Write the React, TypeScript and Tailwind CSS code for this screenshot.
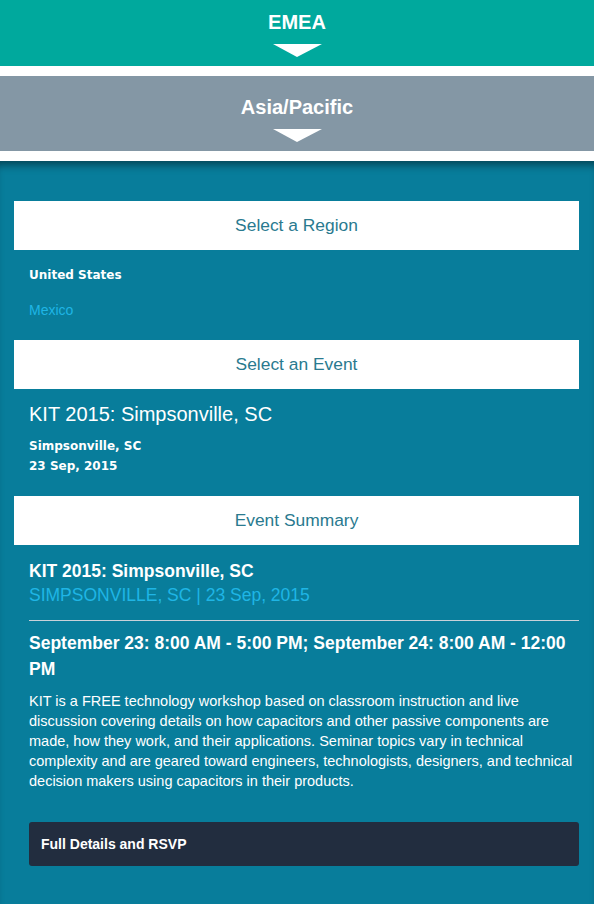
import React from 'react';

const arial = { fontFamily: '"Liberation Sans", Arial, sans-serif' };
const verdana = { fontFamily: '"DejaVu Sans", Verdana, sans-serif' };

// Bande de région repliable avec flèche blanche
const RegionBand = ({ label, className }: { label: string; className: string }) => (
  <div className={`flex flex-col items-center ${className}`}>
    <div className="text-[20px] leading-[24px] font-bold text-white">{label}</div>
    <div className="mt-[10px] w-0 h-0 border-l-[24px] border-r-[25px] border-t-[13px] border-l-transparent border-r-transparent border-t-white" />
  </div>
);

const SectionTitle = ({ children }: { children: React.ReactNode }) => (
  <div className="h-[49px] bg-white flex items-center justify-center text-[17.4px] text-[#2a7a8f]">
    {children}
  </div>
);

export default function App() {
  return (
    <div className="w-[594px] min-h-[904px] bg-white" style={arial}>
      <RegionBand label="EMEA" className="h-[66px] pt-[10px] bg-[#00a99d]" />
      <div className="h-[10px]" />
      <RegionBand label="Asia/Pacific" className="h-[75px] pt-[19px] bg-[#8497a5]" />
      <div className="h-[10px]" />

      <div className="bg-[#087d9b] pt-[40px] pb-[38px] pl-[14px] pr-[15px] min-h-[743px] shadow-[inset_0_9px_8px_-5px_rgba(0,0,0,0.45)]">
        <SectionTitle>Select a Region</SectionTitle>
        <div className="pl-[15px] pt-[17px] pb-[22px]">
          <div className="text-[12px] leading-[16px] font-bold text-white" style={verdana}>
            United States
          </div>
          <div className="mt-[19px] text-[14px] leading-[16px] text-[#1fb5e5]">Mexico</div>
        </div>

        <SectionTitle>Select an Event</SectionTitle>
        <div className="pl-[15px] pt-[13px] pb-[20px]">
          <div className="text-[20px] leading-[24px] text-white">KIT 2015: Simpsonville, SC</div>
          <div className="mt-[10px] text-[12px] leading-[20px] font-bold text-white" style={verdana}>
            Simpsonville, SC
            <br />
            23 Sep, 2015
          </div>
        </div>

        <SectionTitle>Event Summary</SectionTitle>
        <div className="pl-[15px] pt-[14px]">
          <div className="text-[17.5px] leading-[24px] font-bold text-white">KIT 2015: Simpsonville, SC</div>
          <div className="text-[17.5px] leading-[24px] text-[#1fb5e5]">SIMPSONVILLE, SC | 23 Sep, 2015</div>
          <div className="mt-[13px] h-px bg-[#c9d2d9]" />
          <div className="mt-[9px] text-[17.5px] leading-[26px] font-bold text-white">
            September 23: 8:00 AM - 5:00 PM; September 24: 8:00 AM - 12:00 PM
          </div>
          <p className="mt-[9px] text-[14.5px] leading-[20px] text-white">
            KIT is a FREE technology workshop based on classroom instruction and live discussion covering
            details on how capacitors and other passive components are made, how they work, and their
            applications. Seminar topics vary in technical complexity and are geared toward engineers,
            technologists, designers, and technical decision makers using capacitors in their products.
          </p>
          <button className="mt-[31px] w-full h-[44px] rounded-[3px] bg-[#222d3f] pl-[12px] text-left text-[14px] font-bold text-white">
            Full Details and RSVP
          </button>
        </div>
      </div>
    </div>
  );
}
